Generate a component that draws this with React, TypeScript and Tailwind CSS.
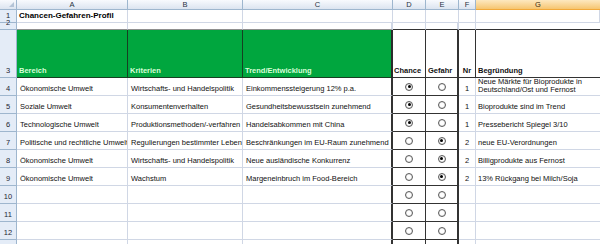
import React from 'react';

type Row = {
  n: number;
  a?: string;
  b?: string;
  c?: string;
  pick?: 'chance' | 'gefahr';
  nr?: string;
  g?: React.ReactNode;
};

const rows: Row[] = [
  {
    n: 4,
    a: 'Ökonomische Umwelt',
    b: 'Wirtschafts- und Handelspolitik',
    c: 'Einkommenssteigerung 12% p.a.',
    pick: 'chance',
    nr: '1',
    g: (
      <>
        Neue Märkte für Bioprodukte in
        <br />
        Deutschland/Ost und Fernost
      </>
    ),
  },
  { n: 5, a: 'Soziale Umwelt', b: 'Konsumentenverhalten', c: 'Gesundheitsbewusstsein zunehmend', pick: 'chance', nr: '1', g: 'Bioprodukte sind im Trend' },
  { n: 6, a: 'Technologische Umwelt', b: 'Produktionsmethoden/-verfahren', c: 'Handelsabkommen mit China', pick: 'chance', nr: '1', g: 'Pressebericht Spiegel 3/10' },
  { n: 7, a: 'Politische und rechtliche Umwelt', b: 'Regulierungen bestimmter Lebensmittel', c: 'Beschränkungen im EU-Raum zunehmend', pick: 'gefahr', nr: '2', g: 'neue EU-Verordnungen' },
  { n: 8, a: 'Ökonomische Umwelt', b: 'Wirtschafts- und Handelspolitik', c: 'Neue ausländische Konkurrenz', pick: 'gefahr', nr: '2', g: 'Billigprodukte aus Fernost' },
  { n: 9, a: 'Ökonomische Umwelt', b: 'Wachstum', c: 'Margeneinbruch im Food-Bereich', pick: 'gefahr', nr: '2', g: '13% Rückgang bei Milch/Soja' },
  { n: 10 },
  { n: 11 },
  { n: 12 },
  { n: 13 },
];

const Radio = ({ on }: { on: boolean }) => (
  <span className="w-[8px] h-[8px] rounded-full border border-[#5a5a5a] bg-white flex items-center justify-center shadow-[inset_0_0_1px_#999]">
    {on && <span className="w-[3px] h-[3px] rounded-full bg-black" />}
  </span>
);

const colHead = 'flex items-center justify-center border-r border-b border-[#9eb6ce] bg-linear-to-b from-[#f8fafd] to-[#dce4f0] text-[#27313f] leading-[9px]';
const rowHead = 'flex items-end justify-center border-r border-b border-[#9eb6ce] bg-[#e4ecf7] text-[#1d2633] leading-[12px]';
const cell = 'flex items-end border-r border-b border-[#d0d7e5] overflow-hidden whitespace-nowrap leading-[12px]';
const green = 'flex items-end border-b bg-[#00a63e] pl-[2px] font-bold text-[#d8ffd8] leading-[12px] whitespace-nowrap';

export default function App() {
  return (
    <div className="w-[600px] h-[244px] overflow-hidden bg-white font-['Liberation_Sans',Arial,sans-serif] text-[7.5px] text-[#111]">
      <div className="grid grid-cols-[17px_111px_115px_150px_33px_33px_17px_1fr] grid-rows-[10px_13px_7px_48px_repeat(10,18px)]">
        {/* column letters */}
        <div className="relative border-r border-b border-[#9eb6ce] bg-linear-to-b from-[#f8fafd] to-[#dce4f0]">
          <span className="absolute right-[2px] bottom-[2px] w-0 h-0 border-l-[5px] border-l-transparent border-b-[5px] border-b-[#b4c3d6]" />
        </div>
        <div className={colHead}>A</div>
        <div className={colHead}>B</div>
        <div className={colHead}>C</div>
        <div className={colHead}>D</div>
        <div className={colHead}>E</div>
        <div className={colHead}>F</div>
        <div className="flex items-center justify-center border-b border-[#f2a93b] bg-linear-to-b from-[#fde8bf] to-[#f6c56f] text-[#3a2a10] leading-[9px]">G</div>

        {/* row 1 */}
        <div className={rowHead}>1</div>
        <div className={`${cell} pl-[2px] font-bold text-[8px] text-black`}>Chancen-Gefahren-Profil</div>
        <div className={cell} />
        <div className={cell} />
        <div className={cell} />
        <div className={cell} />
        <div className={cell} />
        <div className={cell} />

        {/* row 2 */}
        <div className={rowHead}>2</div>
        <div className="border-r border-b border-r-[#d0d7e5] border-b-[#8f8f8f]" />
        <div className="border-r border-b border-r-[#d0d7e5] border-b-[#8f8f8f]" />
        <div className="border-r-2 border-b border-r-[#d0d7e5] border-b-[#8f8f8f]" />
        <div className="border-r border-b border-r-[#d0d7e5] border-b-[#333]" />
        <div className="border-r-2 border-b border-r-[#d0d7e5] border-b-[#333]" />
        <div className="border-r border-b border-r-[#d0d7e5] border-b-[#333]" />
        <div className="border-b border-b-[#333]" />

        {/* row 3: header */}
        <div className={rowHead}>3</div>
        <div className={`${green} border-r border-[#173f22]`}>Bereich</div>
        <div className={`${green} border-r border-[#173f22]`}>Kriterien</div>
        <div className={`${green} border-r-2 border-r-[#2b2b2b] border-b-[#173f22]`}>Trend/Entwicklung</div>
        <div className="flex items-end border-r border-b border-[#333] pl-[1px] font-bold leading-[12px] overflow-hidden whitespace-nowrap">Chance</div>
        <div className="flex items-end border-r-2 border-b border-[#333] pl-[2px] font-bold leading-[12px]">Gefahr</div>
        <div className="flex items-end justify-center border-r border-b border-[#333] font-bold leading-[12px]">Nr</div>
        <div className="flex items-end border-b border-[#333] pl-[2px] font-bold leading-[12px]">Begründung</div>

        {rows.map((r) => (
          <React.Fragment key={r.n}>
            <div className={rowHead}>{r.n}</div>
            <div className={`${cell} pl-[3px]`}>{r.a}</div>
            <div className={`${cell} pl-[3px]`}>{r.b}</div>
            <div className={`${cell} pl-[3px] border-r-2 border-r-[#333]`}>{r.c}</div>
            <div className="flex items-center justify-center border-r border-b border-[#333]">
              {r.n < 13 && <Radio on={r.pick === 'chance'} />}
            </div>
            <div className="flex items-center justify-center border-r-2 border-b border-[#333]">
              {r.n < 13 && <Radio on={r.pick === 'gefahr'} />}
            </div>
            <div className={`${cell} justify-center`}>{r.nr}</div>
            {r.n === 4 ? (
              <div className="flex items-end border-b border-[#d0d7e5] pl-[2px] pb-[1px] leading-[8px] whitespace-nowrap overflow-hidden">
                <span>{r.g}</span>
              </div>
            ) : (
              <div className={`${cell} pl-[2px] border-r-0`}>{r.g}</div>
            )}
          </React.Fragment>
        ))}
      </div>
    </div>
  );
}
